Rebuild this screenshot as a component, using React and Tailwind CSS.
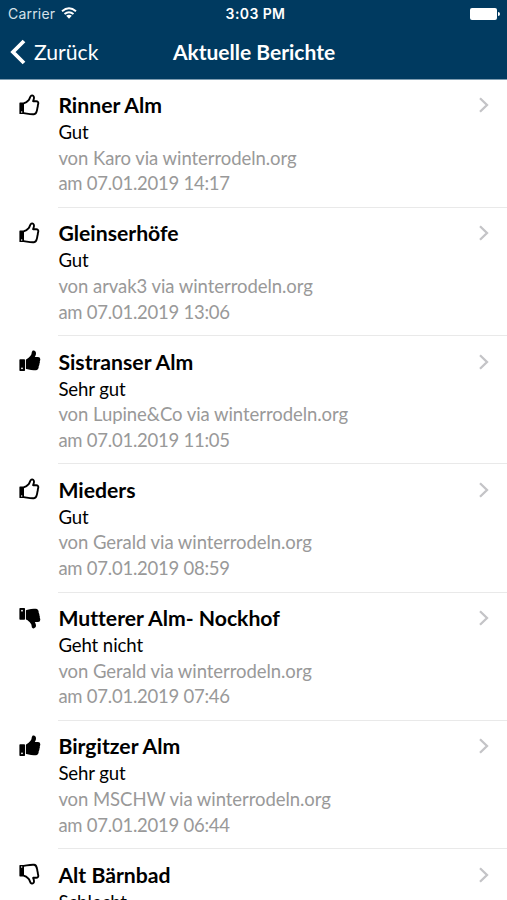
const reports = [
  { name: 'Rinner Alm', rating: 'Gut', icon: 'good', author: 'Karo', time: '14:17' },
  { name: 'Gleinserhöfe', rating: 'Gut', icon: 'good', author: 'arvak3', time: '13:06' },
  { name: 'Sistranser Alm', rating: 'Sehr gut', icon: 'veryGood', author: 'Lupine&Co', time: '11:05' },
  { name: 'Mieders', rating: 'Gut', icon: 'good', author: 'Gerald', time: '08:59' },
  { name: 'Mutterer Alm- Nockhof', rating: 'Geht nicht', icon: 'veryBad', author: 'Gerald', time: '07:46' },
  { name: 'Birgitzer Alm', rating: 'Sehr gut', icon: 'veryGood', author: 'MSCHW', time: '06:44' },
  { name: 'Alt Bärnbad', rating: 'Schlecht', icon: 'bad' },
];

function Thumb({ icon }) {
  const filled = icon === 'veryGood' || icon === 'veryBad';
  const down = icon === 'bad' || icon === 'veryBad';
  return (
    <svg viewBox="0 0 22 22" className={down ? 'h-[22px] w-[22px] -scale-y-100' : 'h-[22px] w-[22px]'}>
      {filled ? (
        <>
          <path fillRule="evenodd" d="M1.1 9.3h4.2q.7 0 .7.7v10.2q0 .8-.7.8H1.1q-.7 0-.7-.8V10q0-.7.7-.7ZM3 17.4a.9.9 0 1 0 0 1.8.9.9 0 0 0 0-1.8Z" />
          <path d="M6.9 9.9q0-.6.6-.7c1.5-.6 2.8-2 4-3.4 1.7-1.8.7-3.7 1.9-4.9.8-.7 3-.1 3.5 1.5.4 1.8-.4 3.2-1.1 4.6H19q2.2 0 2.3 2.3 0 1.1-.5 1.9.3 1.5-.4 2.6.2 1.4-.7 2.5.1 3.7-3 4-4.2.3-7-.7-1-.4-2.2-.5-.6-.1-.6-.7Z" />
        </>
      ) : (
        <>
          <path fillRule="evenodd" d="M1 8.6h4v11.5H1q-.6 0-.6-.7V9.3q0-.7.6-.7ZM2.7 17.3a.7.7 0 1 0 0 1.4.7.7 0 0 0 0-1.4Z" />
          <path
            d="M4.8 9.3c2.5-.2 3.6-1.7 4.9-3.2 1.2-1.4 1.3-4 2.6-4.5 1.7-.5 2.8.5 2.7 2.2 0 1.3-.6 2.4-.9 3.4h3.2c1.4 0 2.1.9 2 2.1-.1 1-.5 1.7-.5 2.7 0 1-.4 1.7-.5 2.5 0 1-.4 1.7-.6 2.7-.3 1.8-1 2.8-2.8 3-4.1.2-6-.5-10.1-1.1"
            fill="none"
            stroke="currentColor"
            strokeWidth="1.9"
            strokeLinejoin="round"
          />
        </>
      )}
    </svg>
  );
}

function Report({ report }) {
  return (
    <li className="flex h-[128.25px] shrink-0 pl-[19px]">
      <div className="w-[39.4px] shrink-0 pt-[14px]">
        <Thumb icon={report.icon} />
      </div>
      <div className="flex min-w-0 flex-1 justify-between border-b border-[#e9e9e9] pt-[11.5px]">
        <div className="whitespace-nowrap">
          <h2 className="text-[21.2px] leading-7 font-bold">{report.name}</h2>
          <p className="mb-[0.7px] text-[18.6px] leading-[26px] tracking-[-0.1px]">{report.rating}</p>
          {report.author && (
            <>
              <p className="text-[18.5px] leading-[25.6px] tracking-[-0.06px] text-[#999]">von {report.author} via winterrodeln.org</p>
              <p className="text-[18.5px] leading-[25.6px] tracking-[-0.24px] text-[#999]">am 07.01.2019 {report.time}</p>
            </>
          )}
        </div>
        <svg viewBox="0 0 12 18" className="mt-[5px] mr-[17px] h-[18px] w-3 shrink-0" fill="none" stroke="#c4c4c7" strokeWidth="2.3">
          <path d="m2 2.2 7 6.8-7 6.8" />
        </svg>
      </div>
    </li>
  );
}

export default function App() {
  return (
    <div className="flex h-[900px] w-[507px] flex-col overflow-hidden bg-white font-['Lato',sans-serif] text-black [font-variant-ligatures:none]">
      <header className="h-[79.5px] shrink-0 border-b border-[#7f9db1] bg-[#003a60] text-white">
        <div className="grid h-[27px] grid-cols-[1fr_auto_1fr] items-center pr-[7px] pl-2 font-['Inter',sans-serif]">
          <div className="flex items-center gap-[6px]">
            <span className="text-[14px] tracking-[0.2px] text-[#d5e1e9]">Carrier</span>
            <svg viewBox="0 0 16 12" className="-mt-0.5 h-3 w-4" fill="none" stroke="white" strokeWidth="1.9">
              <path d="M1 4.2Q8-1.7 15 4.2M3.5 7.1q4.5-3.8 9 0" />
              <path d="M5.2 8.8Q8 6.7 10.8 8.8L8 11.7Z" fill="white" stroke="none" />
            </svg>
          </div>
          <span className="pl-[3px] text-[14px] font-semibold tracking-[0.4px] whitespace-nowrap">3:03 PM</span>
          <div className="flex items-center justify-end gap-px">
            <div className="h-3 w-[27px] rounded-[2px] bg-white" />
            <div className="h-1 w-[2px] rounded-r-full bg-white" />
          </div>
        </div>
        <div className="grid h-[51px] grid-cols-[1fr_auto_1fr] items-center pr-[9px] pl-[10px] text-[21.2px]">
          <div className="flex items-center gap-2">
            <svg viewBox="0 0 16 26" className="h-[26px] w-4" fill="none" stroke="white" strokeWidth="3.8">
              <path d="M14 2 3 13l11 11" />
            </svg>
            <span>Zurück</span>
          </div>
          <h1 className="-mt-0.5 text-[21px] font-bold">Aktuelle Berichte</h1>
        </div>
      </header>
      <ul className="flex min-h-0 flex-1 flex-col overflow-hidden">
        {reports.map((report) => (
          <Report key={report.name} report={report} />
        ))}
      </ul>
    </div>
  );
}
